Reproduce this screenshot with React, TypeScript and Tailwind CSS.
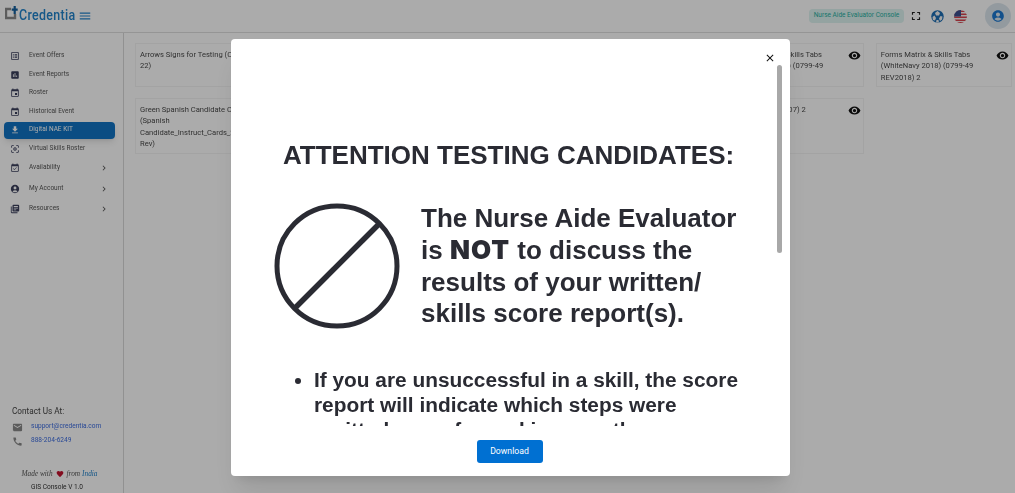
import {
  MdListAlt,
  MdAssessment,
  MdEvent,
  MdFileDownload,
  MdCenterFocusWeak,
  MdEventAvailable,
  MdAccountCircle,
  MdLibraryBooks,
  MdChevronRight,
  MdVisibility,
  MdClose,
  MdEmail,
  MdCall,
  MdFullscreen,
  MdMenu,
  MdFavorite,
} from "react-icons/md";

const navItems = [
  { label: "Event Offers", icon: MdListAlt, h: "h-[18.5px]" },
  { label: "Event Reports", icon: MdAssessment, h: "h-[18.5px]" },
  { label: "Roster", icon: MdEvent, h: "h-[18.5px]" },
  { label: "Historical Event", icon: MdEvent, h: "h-[18.5px]" },
  { label: "Digital NAE KIT", icon: MdFileDownload, h: "h-[16.5px] my-[1px]", active: true },
  { label: "Virtual Skills Roster", icon: MdCenterFocusWeak, h: "h-[18.5px]" },
  { label: "Availability", icon: MdEventAvailable, h: "h-[20.5px]", more: true },
  { label: "My Account", icon: MdAccountCircle, h: "h-[20.5px]", more: true },
  { label: "Resources", icon: MdLibraryBooks, h: "h-[20.5px]", more: true },
];

const row1 = [
  "Arrows Signs for Testing (CNA-22)",
  "Blue Candidate Cards (0799-22)",
  "Forms Matrix & Skills Tabs (Blue 2018) (0799-49)",
  "Forms Matrix & Skills Tabs (Green 2018) (0799-49)",
  "Forms Matrix & Skills Tabs (WhiteBlue 2018) (0799-49 REV2018) 2",
  "Forms Matrix & Skills Tabs (WhiteNavy 2018) (0799-49 REV2018) 2",
];

const row2 = [
  "Green Spanish Candidate Cards (Spanish Candidate_Instruct_Cards_2020 Rev)",
  "Orange Candidate Cards",
  "Pink Candidate Cards",
  "Red Candidate Cards",
  "Skill Tabs (0799-07) 2",
];

function Card({ text, tall }: { text: string; tall?: boolean }) {
  return (
    <div className={`flex items-start border border-[#f4f4f4] pl-[4px] pr-[2px] pt-[5px] ${tall ? "h-[56px]" : "h-[44px]"}`}>
      <p className="flex-1 text-[7.6px] leading-[11.4px] text-[#4a4a4a] min-w-0">{text}</p>
      <MdVisibility className="ml-2 w-[13px] h-[13px] shrink-0 text-[#111]" />
    </div>
  );
}

function Flag() {
  return (
    <svg width="13" height="13" viewBox="0 0 26 26">
      <clipPath id="flag-clip">
        <circle cx="13" cy="13" r="13" />
      </clipPath>
      <g clipPath="url(#flag-clip)">
        <rect width="26" height="26" fill="#f4f4f4" />
        <rect y="1" width="26" height="3" fill="#d8434e" />
        <rect y="7" width="26" height="3" fill="#d8434e" />
        <rect y="13" width="26" height="3" fill="#d8434e" />
        <rect y="19" width="26" height="3" fill="#d8434e" />
        <rect y="24" width="26" height="2" fill="#d8434e" />
        <rect width="14" height="13" fill="#3d4f8f" />
      </g>
    </svg>
  );
}

function Globe() {
  return (
    <svg width="13" height="13" viewBox="0 0 26 26">
      <circle cx="13" cy="13" r="12.5" fill="#1f6fb5" />
      <path d="M13 2 L18 6 L16 11 L10 11 L8 6 Z" fill="#f5f5f5" />
      <path d="M3 14 L7 11 L10 16 L8 21 L4 20 Z" fill="#f5f5f5" />
      <path d="M23 13 L19 12 L16 17 L18 22 L22 19 Z" fill="#f5f5f5" />
      <path d="M11 20 L15 20 L16 25 L10 25 Z" fill="#f5f5f5" />
    </svg>
  );
}

export default function App() {
  return (
    <div className="relative w-[1015px] h-[493px] overflow-hidden bg-white font-['Roboto',sans-serif]">
      <div className="flex flex-col h-full blur-[0.4px]">
        <header className="flex items-center h-[33px] shrink-0 border-b border-[#dedede] pl-[5px] pr-[4px]">
          <svg width="13" height="15" viewBox="0 0 13 15" className="mb-[7px]">
            <path d="M6 4 H1 V13 H10 V9" fill="none" stroke="#8a8a8a" strokeWidth="2.4" />
            <path d="M9.7 1 V9 M6.7 4.7 H12.7" stroke="#14609e" strokeWidth="2.2" />
          </svg>
          <span className="ml-[1px] w-[56px] origin-left scale-x-[0.8] whitespace-nowrap text-[15.5px] font-medium tracking-[0.4px] text-[#2283cb]">Credentia</span>
          <MdMenu className="ml-[3px] w-[14px] h-[14px] text-[#2283cb]" />
          <div className="ml-auto flex items-center">
            <span className="flex items-center justify-center w-[95px] h-[14px] rounded bg-[#ddf3f0] text-[6.5px] text-[#25b0a2]">Nurse Aide Evaluator Console</span>
            <MdFullscreen className="ml-[5px] w-[14px] h-[14px] text-[#222]" />
            <span className="ml-[7.5px] flex"><Globe /></span>
            <span className="ml-[10px] flex"><Flag /></span>
            <span className="ml-[18.5px] flex items-center justify-center w-[26px] h-[26px] rounded-full bg-[#dce6ee]">
              <MdAccountCircle className="w-[14px] h-[14px] text-[#1b78d0]" />
            </span>
          </div>
        </header>
        <div className="flex flex-1 min-h-0">
          <aside className="flex flex-col w-[124px] shrink-0 border-r border-[#d8d8d8]">
            <nav className="pt-[14px] pl-[4px] pr-[8px]">
              {navItems.map((item) => {
                const Icon = item.icon;
                return (
                  <div
                    key={item.label}
                    className={`flex items-center pl-[6px] rounded ${item.h} ${
                      item.active ? "bg-[#1174c4] text-white shadow-md" : "text-[#555]"
                    }`}
                  >
                    <Icon className={`w-[10px] h-[10px] shrink-0 ${item.active ? "text-white" : "text-[#3b3f5c]"}`} />
                    <span className="ml-[9px] text-[6.5px]">{item.label}</span>
                    {item.more && <MdChevronRight className="ml-auto mr-[6px] w-[10px] h-[10px] text-[#555]" />}
                  </div>
                );
              })}
            </nav>
            <div className="mt-auto pl-[12px] pb-[1px]">
              <p className="text-[8.2px] text-[#444] leading-none">Contact Us At:</p>
              <div className="flex items-center mt-[5px] h-[14px]">
                <MdEmail className="w-[11px] h-[11px] text-[#888]" />
                <span className="ml-[8px] text-[6.55px] text-[#3d6de0]">support@credentia.com</span>
              </div>
              <div className="flex items-center h-[14px]">
                <MdCall className="w-[11px] h-[11px] text-[#888]" />
                <span className="ml-[8px] text-[6.55px] text-[#3d6de0]">888-204-6249</span>
              </div>
              <div className="flex items-center justify-center mt-[21.5px] pr-[16px] h-[9px] font-['Liberation_Serif',serif] italic text-[7.3px] text-[#555]">
                Made with
                <MdFavorite className="mx-[3px] w-[8px] h-[8px] text-[#c4122f]" />
                from
                <span className="ml-[2px] text-[#2283cb]">India</span>
              </div>
              <p className="mt-[4.5px] pr-[21px] text-center text-[6.55px] leading-[9px] text-[#333]">GIS Console V 1.0</p>
            </div>
          </aside>
          <main className="flex-1 min-w-0 pl-[11px] pr-[3px] pt-[10px]">
            <div className="grid grid-cols-6 gap-x-[12px] gap-y-[11px] items-start">
              {row1.map((t) => (
                <Card key={t} text={t} />
              ))}
              {row2.map((t) => (
                <Card key={t} text={t} tall />
              ))}
            </div>
          </main>
        </div>
      </div>

      <div className="absolute inset-0 bg-black/[0.33]" />

      <div className="absolute left-[231px] top-[39px] w-[559px] h-[437px] flex flex-col rounded-sm bg-white shadow-xl">
        <div className="flex-1 min-h-0 overflow-hidden text-[#2a2b33] font-['Liberation_Sans',sans-serif] font-bold">
          <h1 className="pt-[100px] pl-[52px] text-[26px] leading-[32px] whitespace-nowrap">ATTENTION TESTING CANDIDATES:</h1>
          <div className="flex items-center mt-[32px] pl-[43px]">
            <svg width="126" height="126" viewBox="0 0 126 126" className="shrink-0">
              <circle cx="63" cy="63" r="60" fill="none" stroke="#2a2b33" strokeWidth="5" />
              <path d="M21 105 L105 21" stroke="#2a2b33" strokeWidth="5.5" />
            </svg>
            <p className="ml-[21px] text-[26px] leading-[31.4px] whitespace-nowrap">
              The Nurse Aide Evaluator
              <br />
              is <span className="font-['Inter',sans-serif] font-black tracking-[1px]">NOT</span> to discuss the
              <br />
              results of your written/
              <br />
              skills score report(s).
            </p>
          </div>
          <ul className="mt-[37px] pl-[83px] list-disc text-[20.85px] leading-[25px] whitespace-nowrap">
            <li>
              If you are unsuccessful in a skill, the score
              <br />
              report will indicate which steps were
              <br />
              omitted or performed incorrectly or
            </li>
          </ul>
        </div>
        <div className="flex items-start justify-center h-[50px] shrink-0 pt-[14px] pr-[2px]">
          <button className="w-[66px] h-[23px] rounded-[3px] bg-[#0070d2] text-white text-[8.7px]">Download</button>
        </div>
        <MdClose className="absolute right-[14px] top-[13px] w-[12px] h-[12px] text-[#111]" />
        <div className="absolute left-[546px] top-[26px] w-[5px] h-[188px] rounded bg-[#a8a8a8]" />
      </div>
    </div>
  );
}
